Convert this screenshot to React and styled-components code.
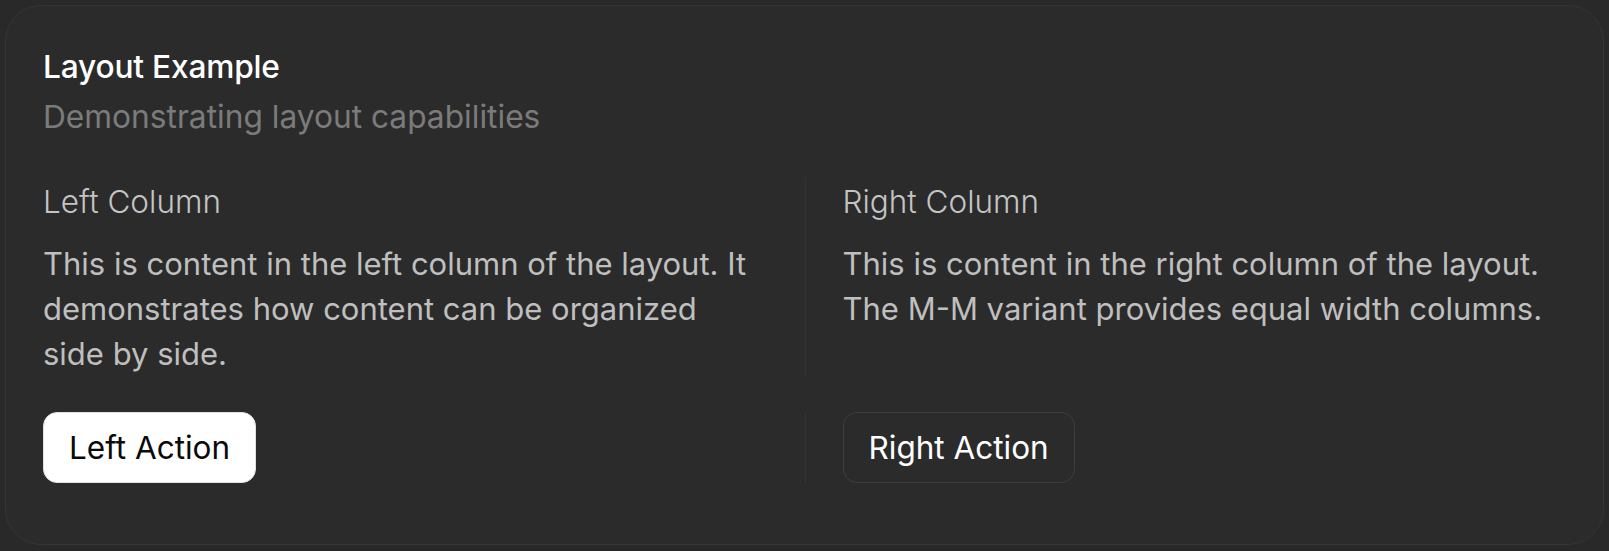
import React from "react";
import styled, { createGlobalStyle } from "styled-components";

const Global = createGlobalStyle`
  html, body {
    margin: 0;
    padding: 0;
    background: #292929;
  }
  body {
    font-family: Inter, "Noto Sans", sans-serif;
    -webkit-font-smoothing: antialiased;
  }
`;

const Page = styled.div`
  padding: 5px 5px 6px 5px;
`;

const Card = styled.section`
  box-sizing: border-box;
  width: 1599px;
  height: 540px;
  background: #2b2b2b;
  border: 1px solid #353535;
  border-radius: 36px;
  padding: 37px 37px 0 37px;
  display: flex;
  flex-direction: column;
`;

const Header = styled.header`
  display: flex;
  flex-direction: column;
  gap: 5px;
  margin-bottom: 40px;
`;

const Title = styled.h2`
  margin: 0;
  font-size: 31.7px;
  line-height: 48px;
  font-weight: 500;
  color: #ffffff;
  letter-spacing: -0.2px;
`;

const Subtitle = styled.p`
  margin: 0;
  font-size: 31.7px;
  line-height: 42px;
  font-weight: 400;
  color: #7b7b7b;
`;

const Row = styled.div`
  display: grid;
  grid-template-columns: 1fr 1fr;
  margin-bottom: ${(p) => p.$gap || 0}px;
`;

const Column = styled.div`
  box-sizing: border-box;
  display: flex;
  flex-direction: column;
  align-items: flex-start;
  gap: 15px;
  padding: ${(p) => (p.$side === "right" ? "0 0 0 37px" : "0 48px 0 0")};
  border-left: ${(p) => (p.$side === "right" ? "1px solid #333333" : "none")};
`;

const ColumnTitle = styled.h3`
  margin: 0;
  font-size: 31.5px;
  line-height: 48px;
  font-weight: 300;
  color: #c4c4c4;
`;

const Body = styled.p`
  margin: 0;
  font-size: 31px;
  line-height: 45px;
  font-weight: 400;
  color: #bfbfbf;
`;

const Button = styled.button`
  box-sizing: border-box;
  height: 71px;
  padding: 0 25px;
  border-radius: 14px;
  font-family: Inter, "Noto Sans", sans-serif;
  font-size: 31.5px;
  font-weight: 400;
  cursor: pointer;
  background: ${(p) => (p.$variant === "primary" ? "#ffffff" : "transparent")};
  color: ${(p) => (p.$variant === "primary" ? "#0a0a0a" : "#ffffff")};
  border: 1.5px solid ${(p) => (p.$variant === "primary" ? "#e2e2e2" : "#3d3d3d")};
`;

export default function App() {
  return (
    <>
      <Global />
      <Page>
        <Card>
          <Header>
            <Title>Layout Example</Title>
            <Subtitle>Demonstrating layout capabilities</Subtitle>
          </Header>
          <Row $gap={36}>
            <Column $side="left">
              <ColumnTitle>Left Column</ColumnTitle>
              <Body>
                This is content in the left column of the layout. It demonstrates how content can be
                organized side by side.
              </Body>
            </Column>
            <Column $side="right">
              <ColumnTitle>Right Column</ColumnTitle>
              <Body>
                This is content in the right column of the layout. The M-M variant provides equal
                width columns.
              </Body>
            </Column>
          </Row>
          <Row>
            <Column $side="left">
              <Button $variant="primary">Left Action</Button>
            </Column>
            <Column $side="right">
              <Button $variant="outline">Right Action</Button>
            </Column>
          </Row>
        </Card>
      </Page>
    </>
  );
}
